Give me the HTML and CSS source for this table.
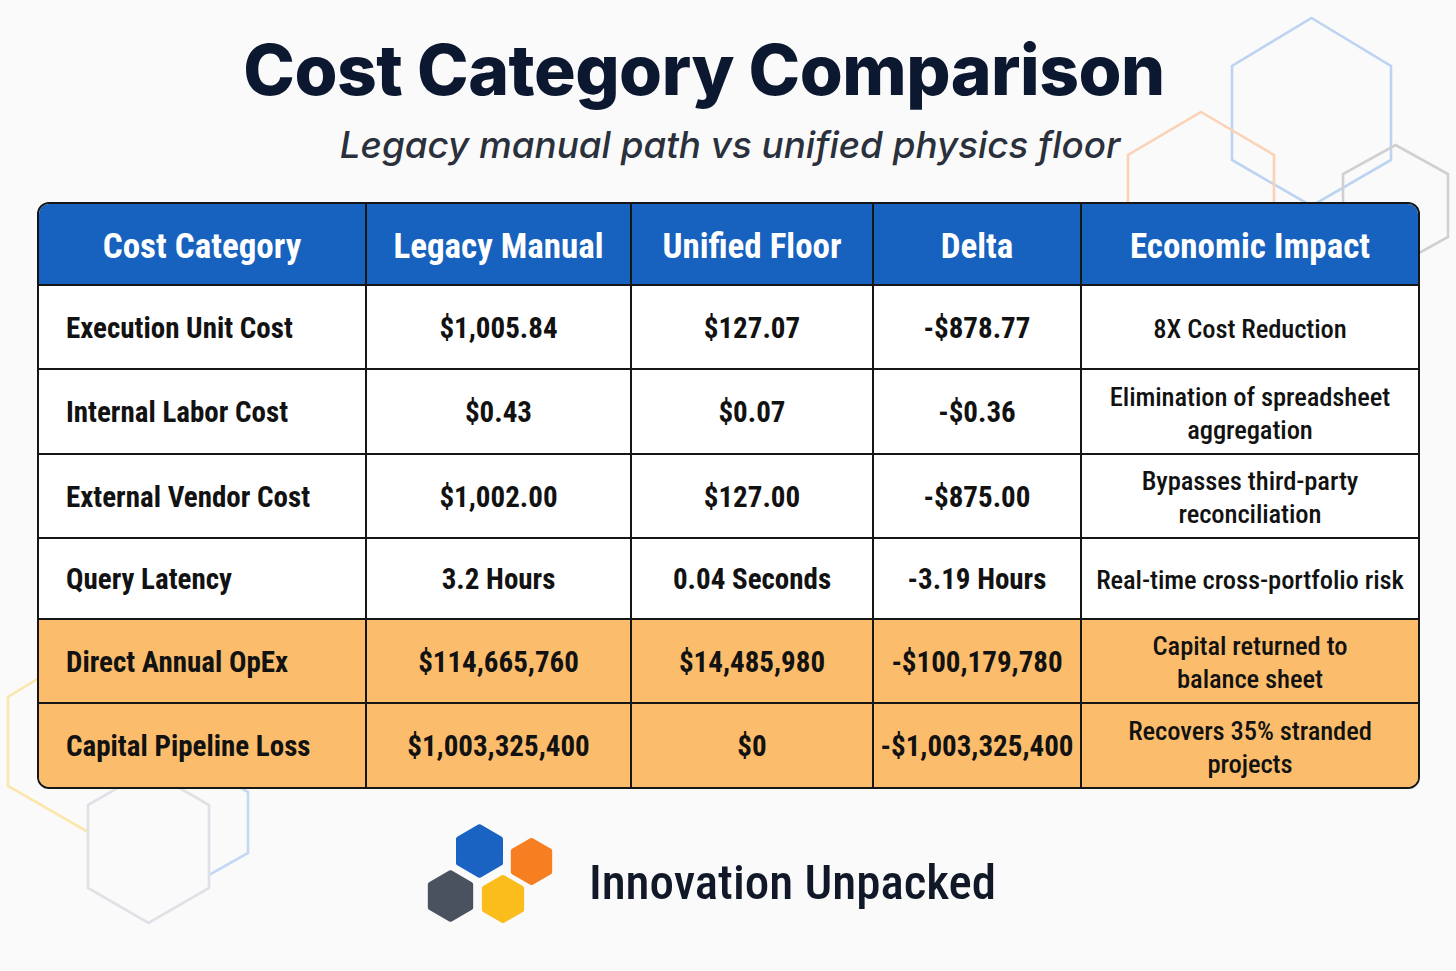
FILE: index.html
```html
<!DOCTYPE html>
<html lang="en">
<head>
<meta charset="utf-8">
<title>Cost Category Comparison</title>
<link rel="stylesheet" href="styles.css">
</head>
<body>
<div class="page">
  <svg class="deco" width="1456" height="971" viewBox="0 0 1456 971" aria-hidden="true">
    <polygon class="hx hx-blue" points="1311.5,18 1391,66 1391,160 1311.5,206 1232,160 1232,66"/>
    <polygon class="hx hx-orange" points="1201,112 1274,155 1274,238 1201,280 1128,238 1128,155"/>
    <polygon class="hx hx-gray" points="1395.5,145 1448,174 1448,237 1395.5,266 1343,237 1343,174"/>
    <polygon class="hx hx-yellow" points="88,648 168,694 168,786 88,832 8,786 8,697"/>
    <polygon class="hx hx-blue2" points="195,762 248,792 248,853 195,883 142,853 142,792"/>
    <polygon class="hx hx-gray2" points="148.5,770 209,805 209,888 148.5,923 88,888 88,805"/>
  </svg>

  <header class="heading">
    <h1 class="title">Cost Category Comparison</h1>
    <p class="subtitle">Legacy manual path vs unified physics floor</p>
  </header>

  <div class="table">
    <div class="cell head first">Cost Category</div>
    <div class="cell head">Legacy Manual</div>
    <div class="cell head">Unified Floor</div>
    <div class="cell head">Delta</div>
    <div class="cell head last">Economic Impact</div>

    <div class="cell first">Execution Unit Cost</div>
    <div class="cell">$1,005.84</div>
    <div class="cell">$127.07</div>
    <div class="cell">-$878.77</div>
    <div class="cell impact last">8X Cost Reduction</div>

    <div class="cell first">Internal Labor Cost</div>
    <div class="cell">$0.43</div>
    <div class="cell">$0.07</div>
    <div class="cell">-$0.36</div>
    <div class="cell impact last">Elimination of spreadsheet<br>aggregation</div>

    <div class="cell first">External Vendor Cost</div>
    <div class="cell">$1,002.00</div>
    <div class="cell">$127.00</div>
    <div class="cell">-$875.00</div>
    <div class="cell impact last">Bypasses third-party<br>reconciliation</div>

    <div class="cell first">Query Latency</div>
    <div class="cell">3.2 Hours</div>
    <div class="cell">0.04 Seconds</div>
    <div class="cell">-3.19 Hours</div>
    <div class="cell impact last">Real-time cross-portfolio risk</div>

    <div class="cell hl first">Direct Annual OpEx</div>
    <div class="cell hl">$114,665,760</div>
    <div class="cell hl">$14,485,980</div>
    <div class="cell hl">-$100,179,780</div>
    <div class="cell hl impact last">Capital returned to<br>balance sheet</div>

    <div class="cell hl first bottom">Capital Pipeline Loss</div>
    <div class="cell hl bottom">$1,003,325,400</div>
    <div class="cell hl bottom">$0</div>
    <div class="cell hl bottom">-$1,003,325,400</div>
    <div class="cell hl impact last bottom">Recovers 35% stranded<br>projects</div>
  </div>

  <footer class="brand">
    <svg class="logo" width="130" height="104" viewBox="0 0 130 104" aria-hidden="true">
      <polygon class="lg lg-blue" points="53.5,5.75 74.5,17.875 74.5,42.125 53.5,54.25 32.5,42.125 32.5,17.875"/>
      <polygon class="lg lg-orange" points="105.5,19.5 123.69,30 123.69,51 105.5,61.5 87.31,51 87.31,30"/>
      <polygon class="lg lg-gray" points="24.5,51.7 44.68,63.35 44.68,86.65 24.5,98.3 4.32,86.65 4.32,63.35"/>
      <polygon class="lg lg-yellow" points="77,56.5 95.62,67.25 95.62,88.75 77,99.5 58.38,88.75 58.38,67.25"/>
    </svg>
    <span class="brand-name">Innovation Unpacked</span>
  </footer>
</div>
</body>
</html>
```

FILE: styles.css
```css
html, body {
  margin: 0;
  padding: 0;
}

body {
  background: #fafafa;
  width: 1456px;
  height: 971px;
  overflow: hidden;
}

.page {
  position: relative;
  width: 1456px;
  height: 971px;
  display: flex;
  flex-direction: column;
}

.deco {
  position: absolute;
  left: 0;
  top: 0;
  z-index: 0;
}

.hx {
  fill: none;
  stroke-width: 2.6;
  stroke-linejoin: miter;
}
.hx-blue { stroke: #bcd3f2; }
.hx-orange { stroke: #fbd2b6; }
.hx-gray { stroke: #cfd0d2; }
.hx-yellow { stroke: #fbe7ac; }
.hx-blue2 { stroke: #c3d8f3; }
.hx-gray2 { stroke: #dfe1e6; fill: #fafafa; }

.heading {
  position: relative;
  z-index: 1;
  text-align: center;
  padding-top: 34px;
}

.title {
  margin: 0;
  padding-right: 48px;
  font-family: "Inter", "Liberation Sans", sans-serif;
  font-weight: 800;
  font-size: 69.5px;
  line-height: 72px;
  letter-spacing: -0.5px;
  color: #0c1730;
}

.subtitle {
  margin: 17px 0 0 0;
  font-family: "Inter", "Liberation Sans", sans-serif;
  font-style: italic;
  font-weight: 500;
  font-size: 36.8px;
  line-height: 44px;
  color: #2a303c;
  padding-left: 4px;
}

.table {
  position: relative;
  z-index: 1;
  margin: 35px 0 0 37px;
  width: 1379px;
  display: grid;
  grid-template-columns: 328px 265px 242px 208px 336px;
  grid-template-rows: 82px 84px 85px 84px 81px 84px 83px;
  border: 2px solid #161616;
  border-radius: 12px;
  overflow: hidden;
  background: #ffffff;
  font-family: "Roboto", "DejaVu Sans Condensed", sans-serif;
  font-stretch: 81%;
  color: #121212;
}

.cell {
  box-sizing: border-box;
  border-right: 2px solid #161616;
  border-bottom: 2px solid #161616;
  display: flex;
  align-items: center;
  justify-content: center;
  text-align: center;
  font-weight: 700;
  font-size: 29px;
  line-height: 33px;
  background: #ffffff;
  padding-top: 2px;
}

.cell.first {
  justify-content: flex-start;
  text-align: left;
  padding-left: 27px;
}

.cell.last { border-right: none; }
.cell.bottom { border-bottom: none; }

.cell.head {
  background: #1762be;
  color: #ffffff;
  font-size: 35px;
  justify-content: center;
  padding-left: 0;
  padding-top: 4px;
}

.cell.impact {
  font-weight: 500;
  font-size: 26.6px;
  letter-spacing: -0.1px;
  line-height: 33px;
}

.cell.hl { background: #fbbd6b; }

.brand {
  position: relative;
  z-index: 1;
  margin-top: 32px;
  display: flex;
  align-items: center;
  justify-content: center;
  gap: 33px;
  padding-right: 34px;
}

.logo { display: block; }

.lg {
  stroke-width: 5;
  stroke-linejoin: round;
}
.lg-blue { fill: #1a63c2; stroke: #1a63c2; }
.lg-orange { fill: #f77f22; stroke: #f77f22; }
.lg-gray { fill: #4a5260; stroke: #4a5260; }
.lg-yellow { fill: #fbbd1c; stroke: #fbbd1c; }

.brand-name {
  font-family: "Roboto", "DejaVu Sans Condensed", sans-serif;
  font-stretch: 80%;
  font-size: 49px;
  font-weight: 500;
  color: #111827;
  margin-top: 18px;
}
```
